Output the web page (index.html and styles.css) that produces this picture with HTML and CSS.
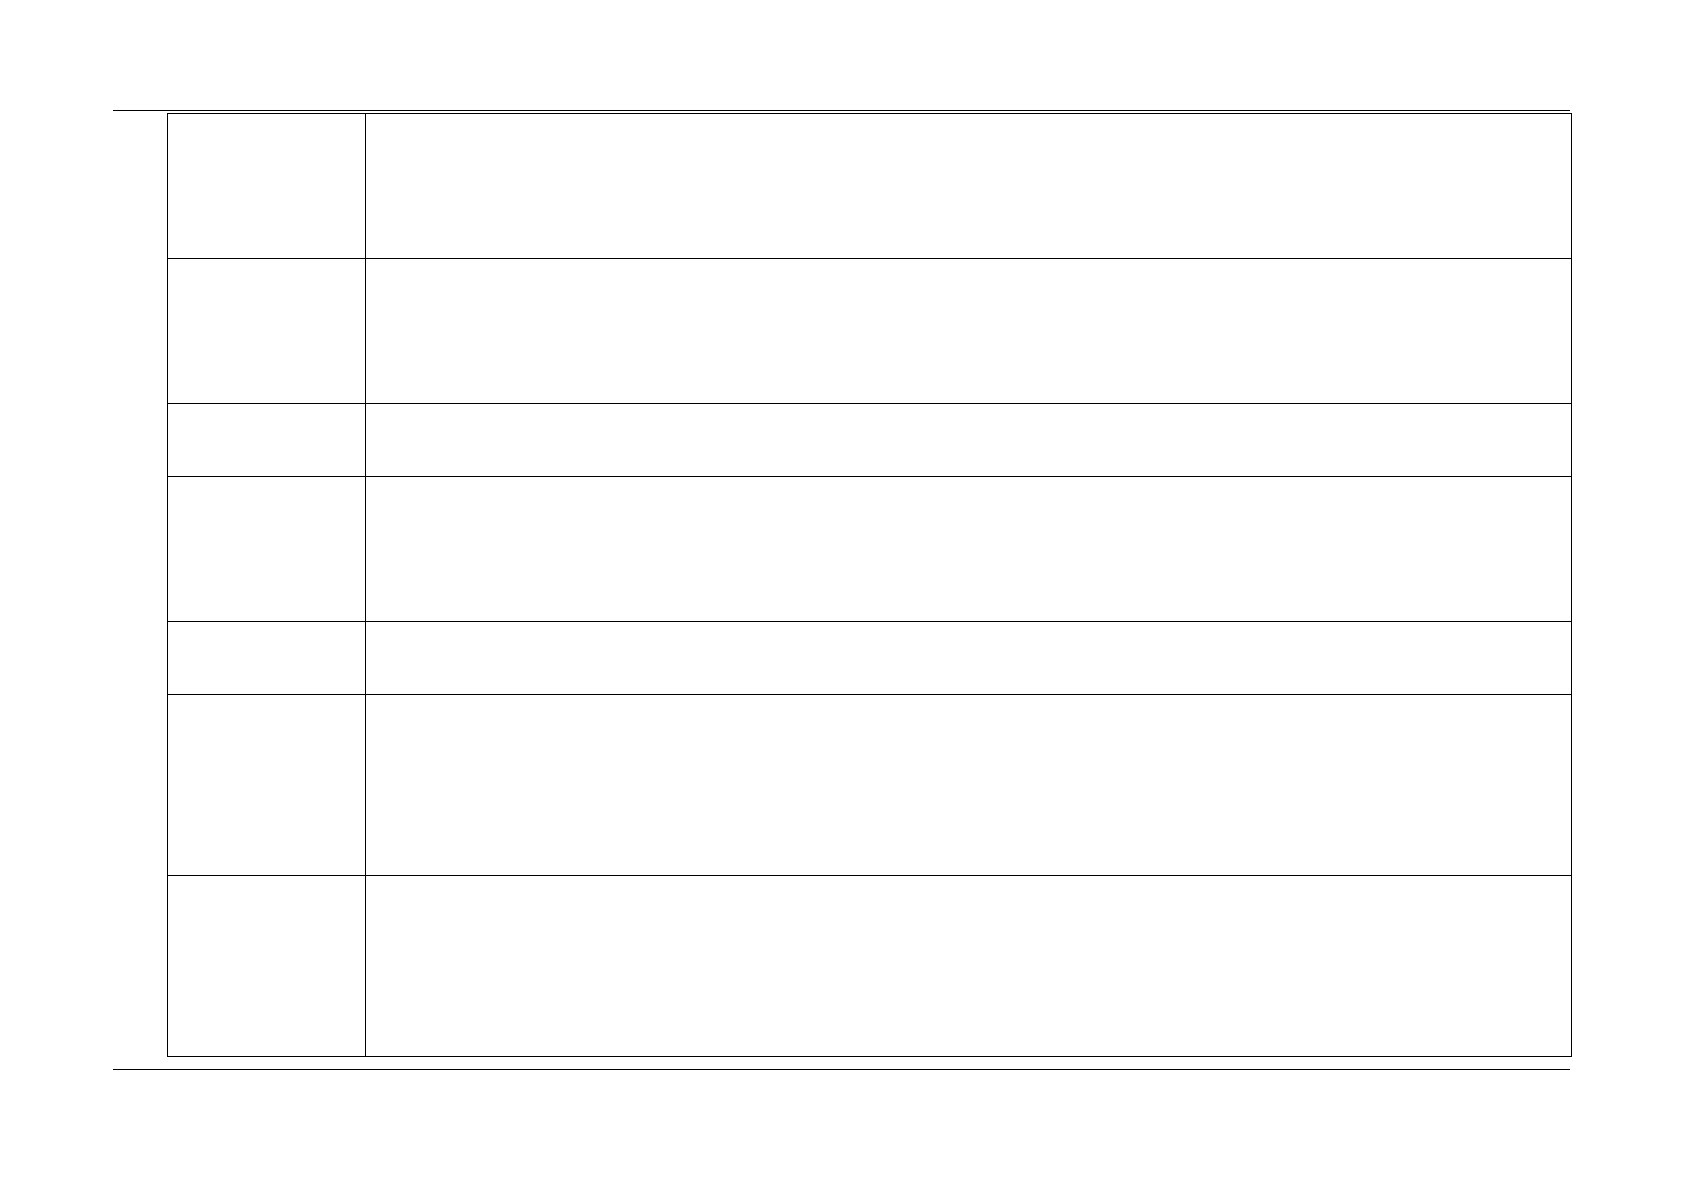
FILE: index.html
```html
<!DOCTYPE html>
<html lang="en">
<head>
<meta charset="utf-8">
<title>Table</title>
<link rel="stylesheet" href="styles.css">
</head>
<body>
<div class="page">
  <div class="sheet">
    <div class="grid">
      <div class="cell"></div><div class="cell"></div>
      <div class="cell"></div><div class="cell"></div>
      <div class="cell"></div><div class="cell"></div>
      <div class="cell"></div><div class="cell"></div>
      <div class="cell"></div><div class="cell"></div>
      <div class="cell"></div><div class="cell"></div>
      <div class="cell"></div><div class="cell"></div>
    </div>
  </div>
</div>
</body>
</html>
```
FILE: styles.css
```css
html, body {
  margin: 0;
  padding: 0;
  background: #ffffff;
  font-family: "Liberation Sans", Arial, sans-serif;
}
.page {
  padding-top: 110px;
}
.sheet {
  margin-left: 113px;
  width: 1457px;
  border-top: 1px solid #000;
  border-bottom: 1px solid #000;
}
.grid {
  margin: 2px 0 12px 54px;
  width: 1405px;
  box-sizing: border-box;
  display: grid;
  grid-template-columns: 198px 1206px;
  grid-template-rows: 145px 145px 73px 145px 73px 181px 181px;
  border-top: 1px solid #000;
  border-left: 1px solid #000;
}
.cell {
  box-sizing: border-box;
  border-right: 1px solid #000;
  border-bottom: 1px solid #000;
}
```
